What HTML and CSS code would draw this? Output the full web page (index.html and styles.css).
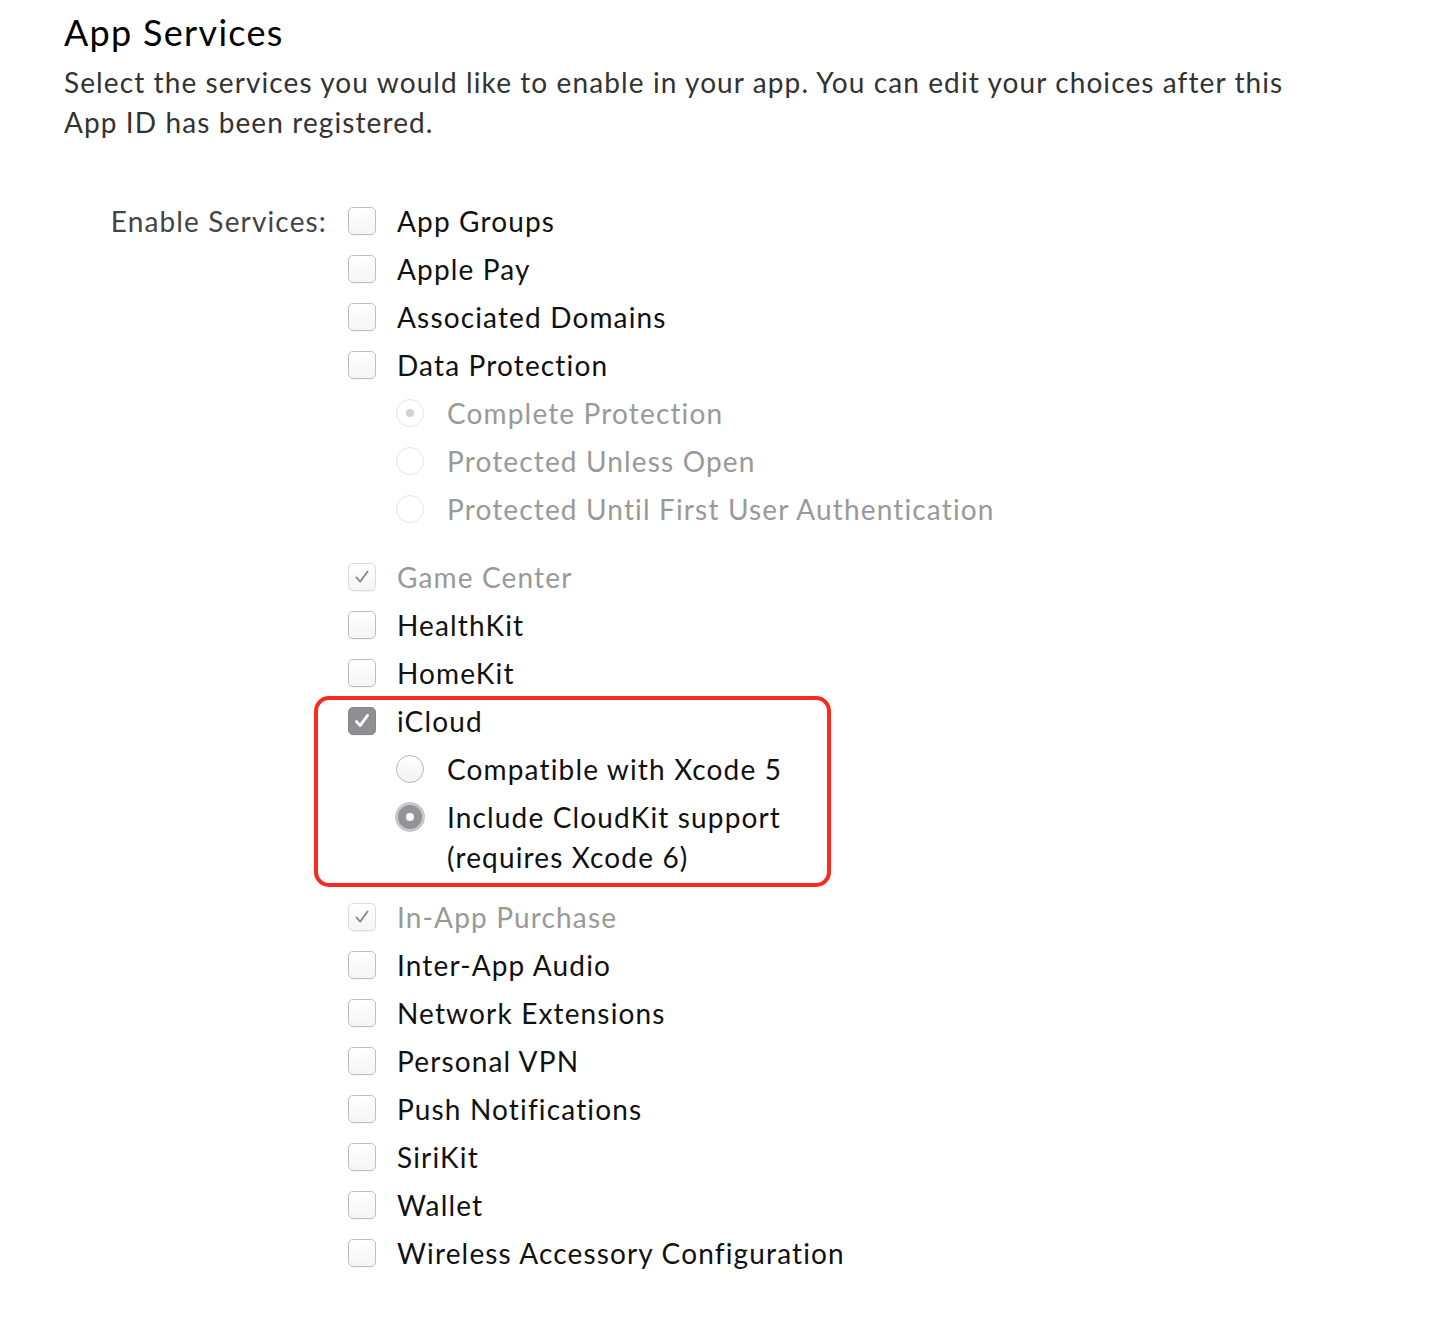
FILE: index.html
```html
<!DOCTYPE html>
<html lang="en">
<head>
  <meta charset="UTF-8" />
  <meta name="viewport" content="width=device-width, initial-scale=1.0" />
  <title>App Services</title>
  <link rel="stylesheet" href="styles.css">
</head>
<body>
  <div class="page">
    <h1>App Services</h1>
    <p class="intro">Select the services you would like to enable in your app. You can edit your choices after this App ID has been registered.</p>

    <div class="services">
      <div class="services-label">Enable Services:</div>
      <div class="services-list">
        <div class="row"><span class="box"></span><span class="text">App Groups</span></div>
        <div class="row"><span class="box"></span><span class="text">Apple Pay</span></div>
        <div class="row"><span class="box"></span><span class="text">Associated Domains</span></div>
        <div class="row"><span class="box"></span><span class="text">Data Protection</span></div>
        <div class="sub sub-gap">
          <div class="row disabled"><span class="radio dot"></span><span class="text">Complete Protection</span></div>
          <div class="row disabled"><span class="radio"></span><span class="text">Protected Unless Open</span></div>
          <div class="row disabled"><span class="radio"></span><span class="text">Protected Until First User Authentication</span></div>
        </div>
        <div class="row disabled">
          <span class="box"><svg viewBox="0 0 28 28"><path d="M8 14.5l4 4.5 8-11" /></svg></span>
          <span class="text">Game Center</span>
        </div>
        <div class="row"><span class="box"></span><span class="text">HealthKit</span></div>
        <div class="row"><span class="box"></span><span class="text">HomeKit</span></div>

        <div class="highlight">
          <div class="row">
            <span class="box checked"><svg viewBox="0 0 28 28"><path d="M8 14.5l4 4.5 8-11" /></svg></span>
            <span class="text">iCloud</span>
          </div>
          <div class="sub">
            <div class="row"><span class="radio"></span><span class="text">Compatible with Xcode 5</span></div>
            <div class="row last"><span class="radio on"></span><span class="text narrow">Include CloudKit support (requires Xcode 6)</span></div>
          </div>
        </div>

        <div class="row disabled">
          <span class="box"><svg viewBox="0 0 28 28"><path d="M8 14.5l4 4.5 8-11" /></svg></span>
          <span class="text">In-App Purchase</span>
        </div>
        <div class="row"><span class="box"></span><span class="text">Inter-App Audio</span></div>
        <div class="row"><span class="box"></span><span class="text">Network Extensions</span></div>
        <div class="row"><span class="box"></span><span class="text">Personal VPN</span></div>
        <div class="row"><span class="box"></span><span class="text">Push Notifications</span></div>
        <div class="row"><span class="box"></span><span class="text">SiriKit</span></div>
        <div class="row"><span class="box"></span><span class="text">Wallet</span></div>
        <div class="row"><span class="box"></span><span class="text">Wireless Accessory Configuration</span></div>
      </div>
    </div>
  </div>
</body>
</html>
```

FILE: styles.css
```css
body {
  margin: 0;
  background: #fff;
  font-family: Lato, "Open Sans", sans-serif;
  color: #111;
}
.page {
  padding: 10px 64px 40px;
}
h1 {
  margin: 0;
  font-size: 36px;
  line-height: 44px;
  font-weight: normal;
  letter-spacing: 1.3px;
  color: #000;
}
.intro {
  margin: 8px 0 0;
  max-width: 1250px;
  font-size: 28px;
  line-height: 40px;
  letter-spacing: 1.1px;
  color: #333;
}
.services {
  display: flex;
  gap: 21px;
  margin-top: 59px;
  font-size: 28px;
  letter-spacing: 1.15px;
}
.services-label {
  width: 263px;
  text-align: right;
  line-height: 40px;
  color: #444;
}
.services-list {
  display: flex;
  flex-direction: column;
}
.row {
  display: flex;
  align-items: flex-start;
  gap: 21px;
  line-height: 40px;
  margin-bottom: 8px;
  white-space: nowrap;
}
.row.last {
  margin-bottom: 0;
}
.text.narrow {
  white-space: normal;
  max-width: 370px;
}
.disabled .text {
  color: #999;
}
.box {
  box-sizing: border-box;
  width: 28px;
  height: 28px;
  margin-top: 6px;
  border: 1px solid #bdbdbd;
  border-radius: 5px;
  background: linear-gradient(#fff, #f5f5f5);
  box-shadow: 0 1px 0 rgba(0, 0, 0, 0.04);
  flex: none;
}
.box svg {
  display: block;
  width: 26px;
  height: 26px;
}
.box path {
  fill: none;
  stroke: #8a8a8a;
  stroke-width: 2;
  stroke-linecap: round;
  stroke-linejoin: round;
}
.disabled .box {
  border-color: #dcdcdc;
}
.box.checked {
  background: #8e8e93;
  border-color: #86868b;
}
.box.checked path {
  stroke: #fff;
  stroke-width: 3;
}
.sub {
  padding-left: 48px;
}
.sub .row {
  gap: 23px;
}
.sub-gap {
  margin-bottom: 20px;
}
.radio {
  box-sizing: border-box;
  width: 28px;
  height: 28px;
  margin-top: 6px;
  border: 1px solid #b8b8b8;
  border-radius: 50%;
  background: linear-gradient(#fff, #f2f2f2);
  flex: none;
  position: relative;
}
.disabled .radio {
  border-color: #e4e4e4;
  background: #fff;
}
.radio.dot::after,
.radio.on::after {
  content: "";
  position: absolute;
  left: 50%;
  top: 50%;
  width: 8px;
  height: 8px;
  margin: -4px 0 0 -4px;
  border-radius: 50%;
  background: #d0d0d0;
}
.radio.on {
  width: 30px;
  height: 30px;
  margin: 5px -1px 0;
  border: 3px solid #c8c8cc;
  background: #939398;
}
.radio.on::after {
  background: #fff;
}
.highlight {
  width: 517px;
  box-sizing: border-box;
  margin: -5px 0 10px -34px;
  padding: 1px 0 6px 30px;
  border: 4px solid #fb2a1f;
  border-radius: 15px;
}
```
